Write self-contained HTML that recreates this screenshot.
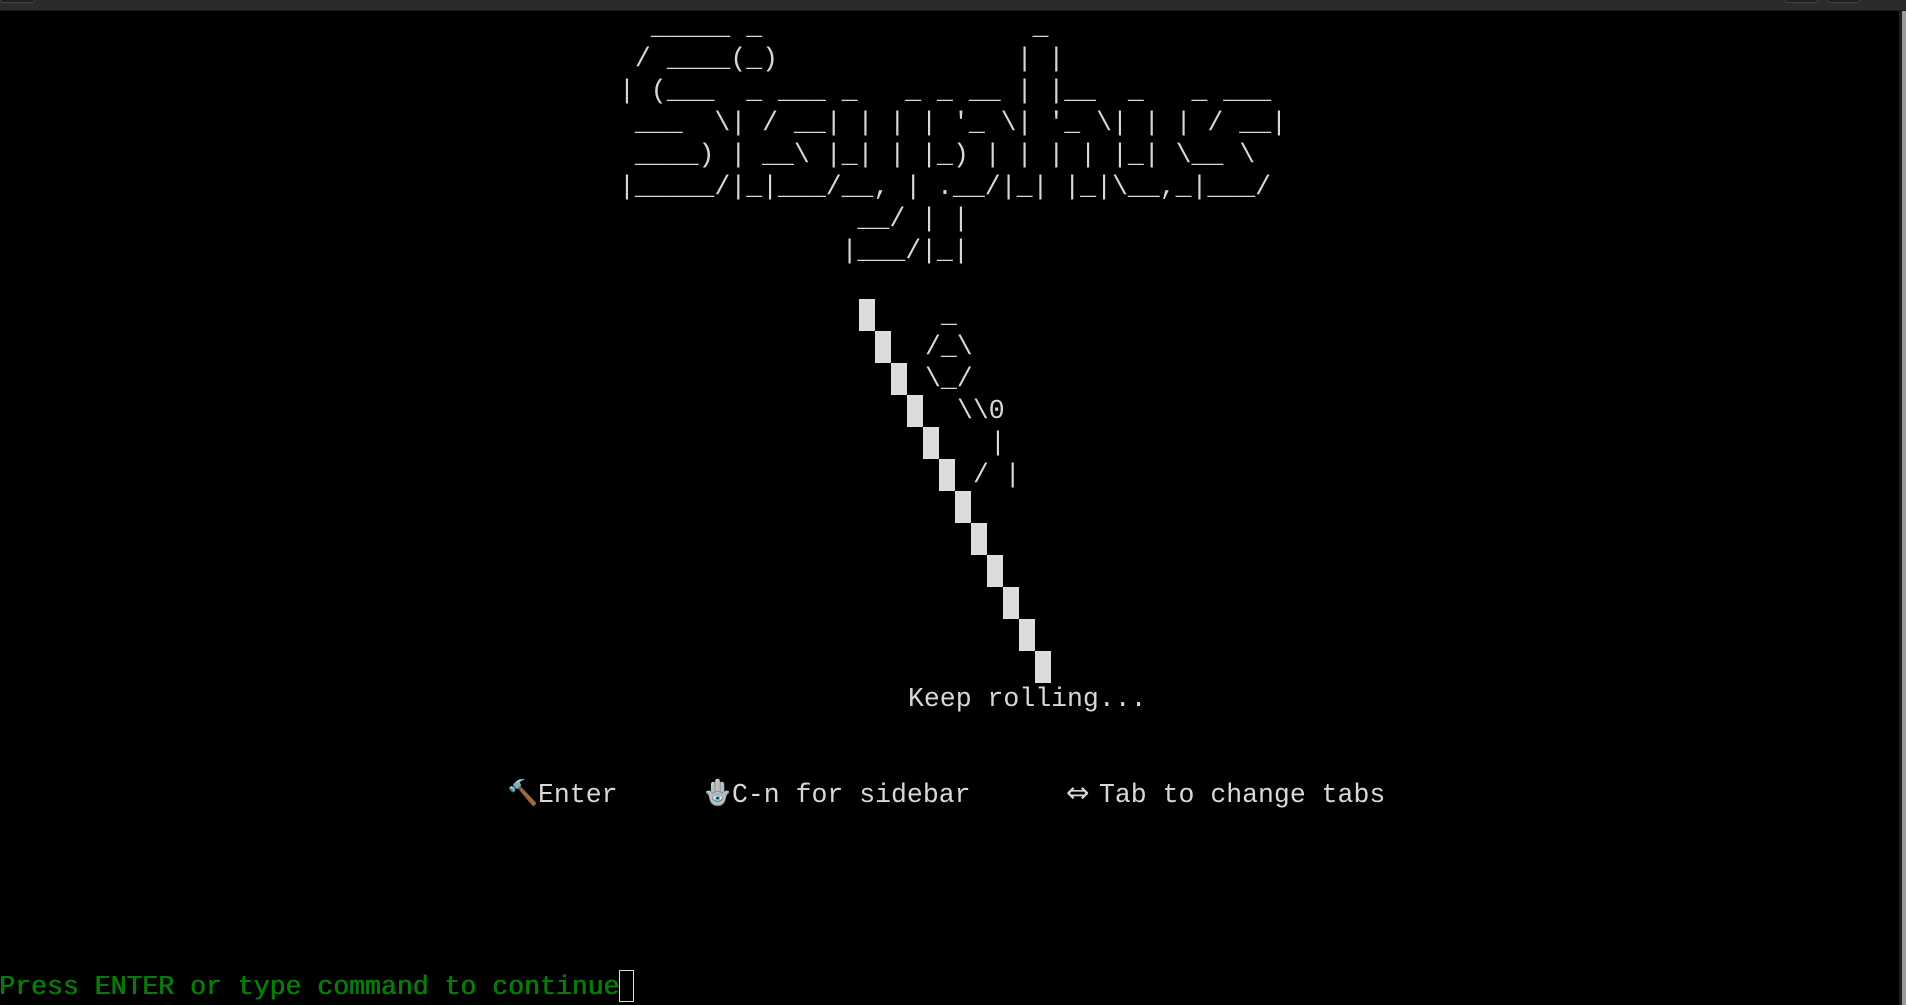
<!DOCTYPE html>
<html><head><meta charset="utf-8"><style>
html,body{margin:0;padding:0;background:#000;width:1906px;height:1005px;overflow:hidden;position:relative}
.bar{position:absolute;left:0;top:0;width:1906px;height:10px;background:#2b2b2b;border-bottom:1px solid #1a1a1a}
.tab{position:absolute;top:0;height:2px;background:#1f1f1f;border:1px solid #444;border-top:none;border-radius:0 0 4px 4px}
.l{position:absolute;font-family:"Liberation Mono",monospace;font-size:26.5px;line-height:32px;height:32px;color:#d8d8d8;white-space:pre}
.b{position:absolute;width:16px;height:32px;background:#dcdcdc}
.p{position:absolute;left:-1px;top:971px;font-family:"Liberation Mono",monospace;font-size:26.5px;line-height:32px;color:#087a08;white-space:pre;text-shadow:0.8px 0 0 #087a08}
.cur{position:absolute;left:619px;top:970px;width:15px;height:32px;border:1px solid #ddd;box-sizing:border-box}
.sb{position:absolute;left:1899px;top:11px;width:3px;height:994px;background:#222}
.sb2{position:absolute;left:1902px;top:11px;width:4px;height:994px;background:#999}
</style></head><body>
<div class="bar"></div>
<div class="tab" style="left:0;width:33px"></div>
<div class="tab" style="left:1785px;width:31px"></div>
<div class="tab" style="left:1827px;width:31px"></div>
<div class="sb"></div><div class="sb2"></div>

<div class="l" style="left:619px;top:11px">  _____ _                 _</div>
<div class="l" style="left:619px;top:43px"> / ____(_)               | |</div>
<div class="l" style="left:619px;top:75px">| (___  _ ___ _   _ _ __ | |__  _   _ ___</div>
<div class="l" style="left:619px;top:107px"> ___  \| / __| | | | '_ \| '_ \| | | / __|</div>
<div class="l" style="left:619px;top:139px"> ____) | __\ |_| | |_) | | | | |_| \__ \</div>
<div class="l" style="left:619px;top:171px">|_____/|_|___/__, | .__/|_| |_|\__,_|___/</div>
<div class="l" style="left:619px;top:203px">               __/ | |</div>
<div class="l" style="left:619px;top:235px">              |___/|_|</div>

<div class="b" style="left:859px;top:299px"></div>
<div class="b" style="left:875px;top:331px"></div>
<div class="b" style="left:891px;top:363px"></div>
<div class="b" style="left:907px;top:395px"></div>
<div class="b" style="left:923px;top:427px"></div>
<div class="b" style="left:939px;top:459px"></div>
<div class="b" style="left:955px;top:491px"></div>
<div class="b" style="left:971px;top:523px"></div>
<div class="b" style="left:987px;top:555px"></div>
<div class="b" style="left:1003px;top:587px"></div>
<div class="b" style="left:1019px;top:619px"></div>
<div class="b" style="left:1035px;top:651px"></div>

<div class="l" style="left:941px;top:299px">_</div>
<div class="l" style="left:925px;top:331px">/_\</div>
<div class="l" style="left:925px;top:363px">\_/</div>
<div class="l" style="left:957px;top:395px">\\0</div>
<div class="l" style="left:990px;top:427px">|</div>
<div class="l" style="left:973px;top:459px">/ |</div>
<div class="l" style="left:908px;top:683px">Keep rolling...</div>

<div class="l" style="left:507px;top:779px;font-size:25px">🔨</div>
<div class="l" style="left:538px;top:779px">Enter</div>
<div class="l" style="left:702px;top:779px;font-size:25px">🪬</div>
<div class="l" style="left:732px;top:779px">C-n for sidebar</div>
<div class="l" style="left:1066px;top:777px;font-family:'DejaVu Sans',sans-serif;font-size:28px">⇔</div>
<div class="l" style="left:1099px;top:779px">Tab to change tabs</div>

<div class="p">Press ENTER or type command to continue</div>
<div class="cur"></div>
</body></html>
